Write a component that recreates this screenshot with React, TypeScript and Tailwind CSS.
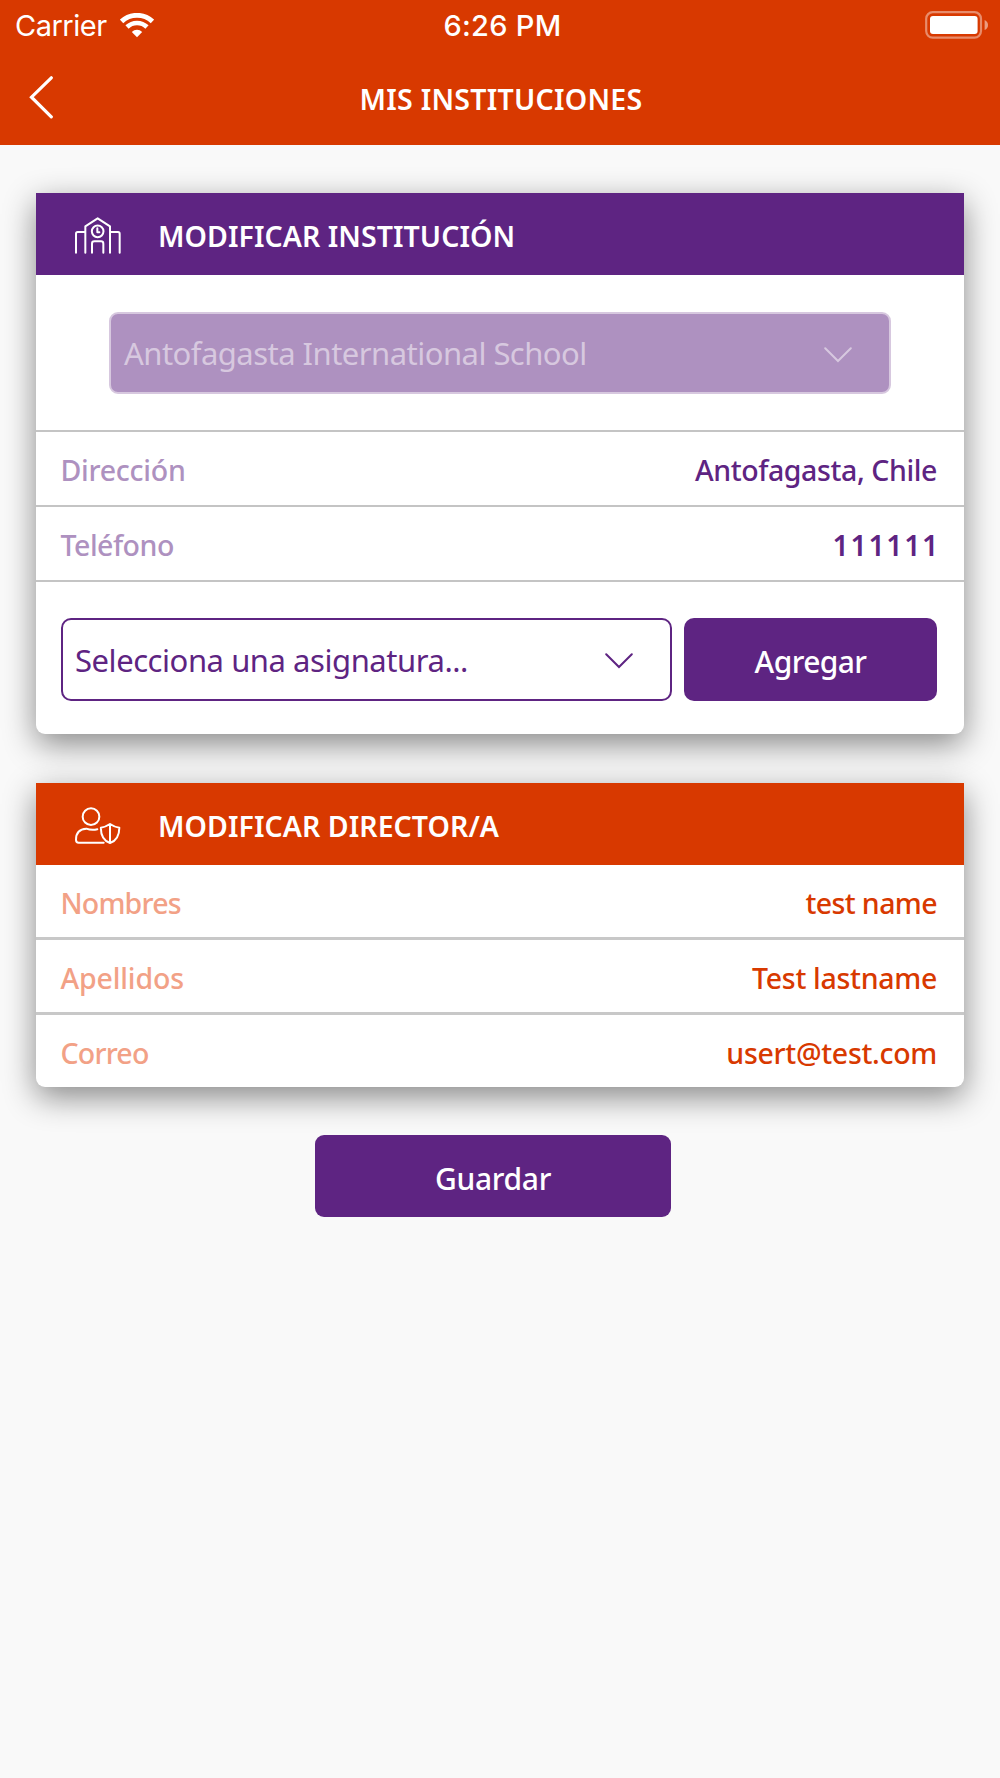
import type { ReactNode } from 'react';
import clsx from 'clsx';

type RowProps = {
  label: string;
  value: string;
  labelClass?: string;
  valueClass?: string;
};

const WifiIcon = () => (
  <svg width="34" height="25" viewBox="0 0 34 25" fill="none" stroke="white">
    <path d="M1.6 8.4 A22.4 22.4 0 0 1 32.4 8.4" strokeWidth="4.8" />
    <path d="M7 14 A14.4 14.4 0 0 1 27 14" strokeWidth="4.6" />
    <path d="M17 24.2 L11.8 19 A7.4 7.4 0 0 1 22.2 19 Z" fill="white" stroke="none" />
  </svg>
);

const BatteryIcon = () => (
  <svg width="64" height="28" viewBox="0 0 64 28" fill="none">
    <rect x="1.2" y="1.2" width="54.8" height="25.4" rx="6.5" stroke="white" strokeOpacity="0.42" strokeWidth="2.2" />
    <rect x="5" y="5" width="47.6" height="18" rx="3" fill="white" />
    <path d="M59.6 9 Q63 10.5 63 14 Q63 17.5 59.6 19 Z" fill="white" fillOpacity="0.5" />
  </svg>
);

const BackIcon = () => (
  <svg width="24" height="43" viewBox="0 0 24 43" fill="none" stroke="white" strokeWidth="3.2" strokeLinecap="round">
    <path d="M22.3 1.8 L2.5 21.2 L22.3 40.8" />
  </svg>
);

const ChevronIcon = () => (
  <svg width="28" height="16" viewBox="0 0 28 16" fill="none" stroke="currentColor" strokeWidth="2" strokeLinecap="round">
    <path d="M1.2 1.2 L14 14 L26.8 1.2" />
  </svg>
);

const SchoolIcon = () => (
  <svg width="46" height="37" viewBox="0 0 138 111" fill="none" stroke="white" strokeWidth="6" strokeLinecap="round" strokeLinejoin="round">
    <path d="M3 107 V50 Q3 45 8 45 H29" />
    <path d="M31 107 V28 L68 4 L105 28 V107" />
    <path d="M107 45 H129 Q134 45 134 50 V107" />
    <path d="M51 107 V80 Q51 73 58 73 H78 Q85 73 85 80 V107" />
    <circle cx="68" cy="43" r="17.5" />
    <path d="M67 34 V46 H73" />
  </svg>
);

const DirectorIcon = () => (
  <svg width="46" height="37" viewBox="0 0 138 111" fill="none" stroke="white" strokeWidth="6" strokeLinecap="round" strokeLinejoin="round">
    <circle cx="48" cy="29" r="25" />
    <path d="M67 67 Q49 71 34 65 C12 66 3 80 3 98 Q3 107 11 107 H86" />
    <path d="M105 51 Q92 60 77.500 62 C77.500 84 86 101 105 108 C124 101 133 84 133 62 Q118 60 105 51 Z M105 51 V108" />
  </svg>
);

const Card = ({
  title,
  icon,
  headerClass,
  children,
}: {
  title: ReactNode;
  icon: ReactNode;
  headerClass: string;
  children: ReactNode;
}) => (
  <section className="w-full rounded-b-[9px] bg-white shadow-[0_10px_32px_rgba(0,0,0,0.46)]">
    <div className={clsx('flex h-[82px] items-center pl-[39px]', headerClass)}>
      <div className="pt-[2px]">{icon}</div>
      <h2 className="ml-[37px] pt-1 text-[28.5px] leading-none font-semibold tracking-[0.05px] text-white">
        {title}
      </h2>
    </div>
    {children}
  </section>
);

const Row = ({ label, value, labelClass, valueClass }: RowProps) => (
  <div className="flex h-full items-center justify-between pt-1 pr-[27px] pl-[24.5px] text-[28.5px] leading-none font-medium">
    <span className={labelClass}>{label}</span>
    <span className={valueClass}>{value}</span>
  </div>
);

const directorRows: RowProps[] = [
  { label: 'Nombres', value: 'test name', labelClass: 'tracking-[-0.8px]', valueClass: 'tracking-[-0.6px]' },
  { label: 'Apellidos', value: 'Test lastname', labelClass: 'tracking-[-0.15px]', valueClass: 'tracking-[-0.3px]' },
  { label: 'Correo', value: 'usert@test.com', labelClass: 'tracking-[-0.8px]', valueClass: 'tracking-[-0.3px]' },
];

export default function App() {
  return (
    <div className="min-h-[1778px] w-full bg-[#f9f9f9] font-['Noto_Sans',sans-serif]">
      <header className="h-[145px] bg-[#d83900] text-white">
        <div className="grid h-[49px] grid-cols-3 items-center pr-[11px] pl-[15px] font-['Inter',sans-serif] text-[29px] leading-none">
          <div className="flex items-center gap-[13px] pt-px">
            <span className="tracking-[-0.5px]">Carrier</span>
            <WifiIcon />
          </div>
          <span className="pt-[2px] pl-px text-center font-medium tracking-[0.3px]">6:26 PM</span>
          <div className="flex justify-end">
            <BatteryIcon />
          </div>
        </div>
        <div className="grid h-[96px] grid-cols-[1fr_auto_1fr] items-center pl-[29px] pr-[27px]">
          <button type="button" className="flex">
            <BackIcon />
          </button>
          <h1 className="pt-[4px] text-[28.5px] leading-none font-semibold tracking-[0.26px]">
            MIS INSTITUCIONES
          </h1>
        </div>
      </header>

      <main className="flex flex-col items-center px-9 pt-12">
        <Card title="MODIFICAR INSTITUCIÓN" icon={<SchoolIcon />} headerClass="bg-[#5e2482]">
          <div className="px-[73px] pt-[37px] pb-9">
            <div className="flex h-[82px] items-center justify-between rounded-[9px] border-2 border-[#d7c8df] bg-[#ae91c0] pr-[37px] pl-[13px] text-[31px] leading-none text-[#d7c8df]">
              <span className="tracking-[-0.53px]">Antofagasta International School</span>
              <div className="pt-[3px]">
                <ChevronIcon />
              </div>
            </div>
          </div>
          <div className="h-[75px] border-t-2 border-[#c4c4c4]">
            <Row
              label="Dirección"
              value="Antofagasta, Chile"
              labelClass="text-[#ae91c0] tracking-[-0.25px]"
              valueClass="text-[#5e2482] tracking-[-0.4px]"
            />
          </div>
          <div className="h-[75px] border-t-2 border-[#c4c4c4]">
            <Row
              label="Teléfono"
              value="111111"
              labelClass="text-[#ae91c0] tracking-[-0.5px]"
              valueClass="text-[#5e2482] tracking-[1.6px] -mr-[3px] font-semibold"
            />
          </div>
          <div className="flex gap-3 border-t-2 border-[#c4c4c4] pt-9 pr-[27px] pb-[33px] pl-[25px]">
            <div className="flex h-[83px] grow items-center justify-between rounded-[10px] border-2 border-[#5e2482] pr-[37px] pl-[12px] text-[31px] leading-none text-[#5e2482]">
              <span className="pt-[2px] tracking-[-0.45px]">Selecciona una asignatura...</span>
              <div className="pt-[3px]">
                <ChevronIcon />
              </div>
            </div>
            <button
              type="button"
              className="h-[83px] w-[253px] rounded-[10px] bg-[#5e2482] pt-1 text-[30px] leading-none font-medium tracking-[-0.6px] text-white"
            >
              Agregar
            </button>
          </div>
        </Card>

        <div className="mt-[49px] w-full">
          <Card title="MODIFICAR DIRECTOR/A" icon={<DirectorIcon />} headerClass="bg-[#d83900]">
            {directorRows.map((row, index) => (
              <div
                key={row.label}
                className={clsx(index === 0 ? 'h-[72px]' : 'h-[75px] border-t-[3px] border-[#c8c8c8]')}
              >
                <Row
                  label={row.label}
                  value={row.value}
                  labelClass={clsx('text-[#f2a186]', row.labelClass)}
                  valueClass={clsx('text-[#d83900]', row.valueClass)}
                />
              </div>
            ))}
          </Card>
        </div>

        <button
          type="button"
          className="mt-12 mr-[14px] h-[82px] w-[356px] rounded-[9px] bg-[#5e2482] pt-[5px] text-[30px] leading-none font-medium tracking-[-0.3px] text-white"
        >
          Guardar
        </button>
      </main>
    </div>
  );
}
